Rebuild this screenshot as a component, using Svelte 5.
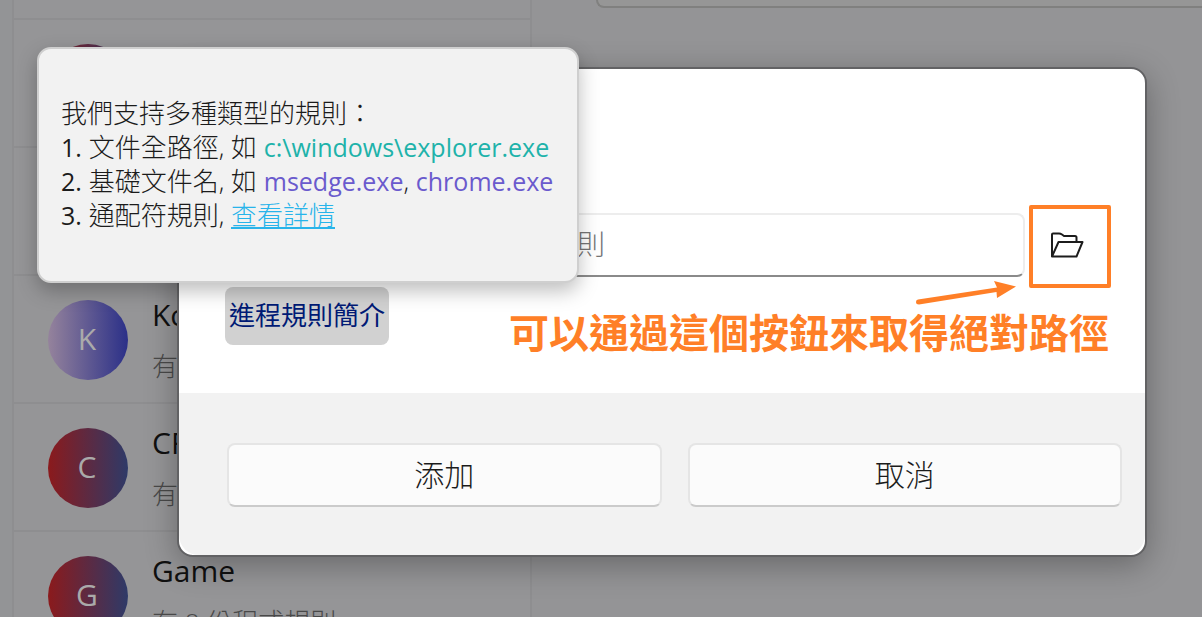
<script>
  const groups = [
    { name: 'Local', count: null, tone: 'red' },
    { name: '', count: null, tone: 'red' },
    { name: 'Kodi', count: 8, tone: 'violet' },
    { name: 'CF', count: 8, tone: 'red' },
    { name: 'Game', count: 8, tone: 'red' },
  ];
</script>

<div class="app">
  <ul class="groups">
    <li class="edge"></li>
    {#each groups as g}
      <li>
        <span class="avatar {g.tone}">{g.count ? g.name[0] : ''}</span>
        <div class="info">
          <div class="name">{g.name}</div>
          {#if g.count}
            <div class="count">有 {g.count} 份程式規則</div>
          {/if}
        </div>
      </li>
    {/each}
  </ul>
  <main><div class="card"></div></main>

  <div class="dialog" role="dialog" aria-label="添加">
    <div class="body">
      <div class="field">
        <input type="text" placeholder="請輸入進程路徑或文件名規則" aria-label="規則" />
        <button class="browse" aria-label="路徑">
          <svg width="34" height="28" viewBox="0 0 34 28" fill="none" stroke="#1c1c1c" stroke-width="2" stroke-linejoin="round">
            <path d="M2 25.500V3.500Q2 2.500 3 2.500H9Q10.500 2.500 12 3.500L14 5H25Q26.500 5 26.500 6.500V10.500" />
            <path d="M2 25.500L8.500 11H32.500L26.500 25.500Z" />
          </svg>
          <span class="mark"></span>
        </button>
      </div>
      <button class="intro">進程規則簡介</button>
      <svg class="arrow" width="104" height="28" viewBox="0 0 104 28" fill="#ff7f27">
        <path d="M3 19.500L82 7.500 79 1 101 6.500 82 18 81.500 12 4 24.500Q1 24.500 1 22T3 19.500Z" />
      </svg>
      <p class="note">可以通過這個按鈕來取得絕對路徑</p>
    </div>
    <footer>
      <button>添加</button>
      <button>取消</button>
    </footer>
  </div>

  <div class="tip">
    <p>我們支持多種類型的規則：</p>
    <p><span class="latin">1.</span> 文件全路徑, 如 <span class="latin teal">c:\windows\explorer.exe</span></p>
    <p><span class="latin">2.</span> 基礎文件名, 如 <span class="latin purple">msedge.exe</span>, <span class="latin purple">chrome.exe</span></p>
    <p><span class="latin">3.</span> 通配符規則, <a href="#details">查看詳情</a></p>
  </div>
</div>

<style>
  :global(body) { margin: 0; }
  .app, .app * { box-sizing: border-box; }
  .app {
    position: relative;
    display: flex;
    height: 100vh;
    overflow: hidden;
    padding-left: 12px;
    background: #939496;
    color: #1b1b1b;
    font-family: "Open Sans", "Noto Sans CJK TC", sans-serif;
    font-size: 26px;
    font-weight: 300;
  }
  button, input { font: inherit; color: inherit; margin: 0; }
  .groups {
    flex: 0 0 520px;
    margin: 0;
    padding: 0;
    list-style: none;
    background: #959597;
    border: solid #8e8e90;
    border-width: 0 2px;
  }
  li {
    display: flex;
    gap: 24px;
    height: 128px;
    padding: 19px 0 0 34px;
    border-bottom: 2px solid #8e8e90;
  }
  li.edge { height: 20px; padding: 0; }
  .avatar {
    width: 80px;
    height: 80px;
    margin-top: 5px;
    padding-right: 2px;
    border-radius: 50%;
    color: #aaa;
    font-size: 30px;
    font-weight: 400;
    line-height: 78px;
    text-align: center;
  }
  .red { background: linear-gradient(90deg, #8b1a1c, #2e3a68); }
  .violet { background: linear-gradient(90deg, #95839c, #2b3088); }
  .info { display: grid; gap: 13px; align-content: start; white-space: nowrap; }
  .name { color: #101010; font-size: 30px; font-weight: 400; line-height: 40px; }
  .count { color: #494949; line-height: 36px; }
  main { flex: 1; padding-left: 64px; background: #949496; }
  .card {
    height: 8px;
    background: #969696;
    border: solid #80807f;
    border-width: 0 0 2px 2px;
    border-radius: 0 0 0 8px;
  }
  .dialog {
    position: absolute;
    top: 67px;
    left: 177px;
    right: 55px;
    overflow: hidden;
    background: #fff;
    border: 2px solid #626264;
    border-radius: 16px;
    box-shadow: 0 8px 32px rgba(0, 0, 0, 0.3);
  }
  .body { position: relative; padding: 144px 34px 48px 48px; }
  .field { display: flex; margin-bottom: 10px; }
  input {
    flex: 1;
    min-width: 0;
    height: 64px;
    padding: 0 12px 2px;
    font-size: 28px;
    background: #fff;
    border: 2px solid #ededed;
    border-bottom-color: #8a8a8a;
    border-radius: 8px;
  }
  input::placeholder { color: #757575; opacity: 1; }
  .browse {
    position: relative;
    display: grid;
    place-items: center;
    width: 86px;
    padding: 0 2px 0 0;
    border: 0;
    background: none;
  }
  .mark {
    position: absolute;
    inset: -8px 0 -11px 4px;
    border: 4px solid #ff7f27;
    border-radius: 2px;
  }
  .intro {
    display: block;
    height: 58px;
    margin-left: -2px;
    padding: 0 4px 4px;
    border: 0;
    border-radius: 8px;
    background: #d1d1d1;
    color: #001a75;
    font-weight: 400;
  }
  .arrow { position: absolute; top: 211px; right: 126px; }
  .note {
    position: absolute;
    top: 239px;
    right: 36px;
    margin: 0;
    color: #ff7f27;
    font-size: 40px;
    font-weight: 700;
    line-height: 50px;
    white-space: nowrap;
  }
  footer {
    display: flex;
    gap: 26px;
    padding: 50px 23px 48px 48px;
    background: #f2f2f2;
    border-radius: 0 0 20px 20px;
  }
  footer button {
    flex: 1;
    height: 64px;
    padding: 0 0 4px;
    background: #fbfbfb;
    border: 2px solid #e5e5e5;
    border-bottom-color: #cbcbcb;
    border-radius: 8px;
    font-size: 30px;
  }
  .tip {
    position: absolute;
    top: 47px;
    left: 37px;
    width: 45%;
    min-width: 542px;
    padding: 47px 22px 49px;
    background: #f2f2f2;
    border: 2px solid #cfcfcf;
    border-radius: 14px;
    box-shadow: 0 8px 20px rgba(0, 0, 0, 0.26);
    line-height: 34px;
    white-space: nowrap;
  }
  .tip p { margin: 0; }
  .latin { font-size: 25px; font-weight: 400; }
  .teal { color: #20b2aa; }
  .purple { color: #6a5acd; }
  a { color: #28b4ea; }
</style>
